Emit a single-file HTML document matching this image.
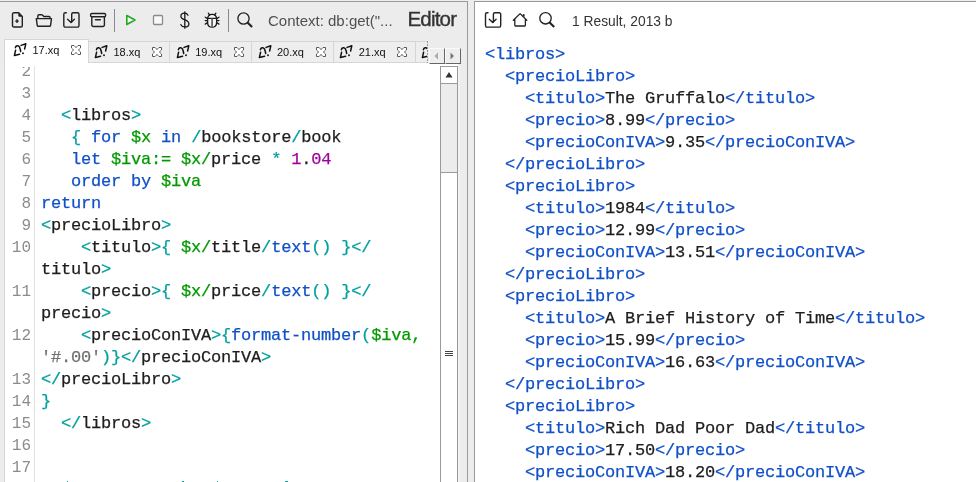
<!DOCTYPE html>
<html><head><meta charset="utf-8"><style>
*{margin:0;padding:0;box-sizing:content-box}
html,body{width:976px;height:482px;overflow:hidden;background:#ececec}
body{position:relative;font-family:"Liberation Sans",sans-serif}
.abs{position:absolute}
.r{position:absolute;left:0;white-space:pre;font-family:"Liberation Mono",monospace;font-size:17px;letter-spacing:-0.2px;line-height:22px;height:22px;color:#1e1e1e;-webkit-text-stroke:0.25px currentColor}
.n{position:absolute;right:1px;white-space:pre;font-family:"Liberation Mono",monospace;font-size:16px;letter-spacing:0px;line-height:22px;color:#8c8c8c}
.tab{position:absolute;overflow:hidden;box-sizing:content-box}
.tl{position:absolute;font-size:11px;line-height:14px;color:#111;white-space:pre}
</style></head><body>
<div id="w" style="position:absolute;left:0;top:0;width:976px;height:482px;background:#ececec;filter:blur(0);overflow:hidden">
<div class="abs" style="left:0;top:0;width:976px;height:1px;background:#eeeeee"></div>
<div class="abs" style="left:0;top:1px;width:467px;height:1px;background:#9a9a9a"></div>
<div class="abs" style="left:475px;top:1px;width:501px;height:1px;background:#9a9a9a"></div>
<div class="abs" style="left:467px;top:1px;width:1px;height:481px;background:#9a9a9a"></div>
<div class="abs" style="left:474px;top:1px;width:1px;height:481px;background:#9a9a9a"></div>
<div class="abs" style="left:475px;top:2px;width:501px;height:480px;background:#fff"></div>

<!-- left toolbar -->
<svg class="abs" style="left:0;top:0" width="467" height="38" viewBox="0 0 467 38">
 <g stroke="#222" stroke-width="1.4" fill="none" stroke-linecap="round" stroke-linejoin="round">
  <path d="M13.8 12.8 h4.9 l3.6 3.6 v9.3 a1.3 1.3 0 0 1 -1.3 1.3 h-7.2 a1.3 1.3 0 0 1 -1.3 -1.3 v-11.6 a1.3 1.3 0 0 1 1.3 -1.3z"/>
  <path d="M17 19.8 v2.6 M15.7 21.1 h2.6"/>
 </g>
 <path d="M18.3 12.8 L22.3 16.8 H19.5 a1.2 1.2 0 0 1 -1.2 -1.2z" fill="#222"/>
 <g stroke="#222" stroke-width="1.4" fill="none" stroke-linecap="round" stroke-linejoin="round">
  <path d="M37.8 18 V16 a1.3 1.3 0 0 1 1.3 -1.3 h2.4 a1.3 1.3 0 0 1 0.9 .4 l1.4 1.4 h5 a1.3 1.3 0 0 1 1.3 1.3 v0.4"/>
  <path d="M36.3 18.6 h15.2 l-0.9 6.5 a1.3 1.3 0 0 1 -1.3 1.2 h-10.8 a1.3 1.3 0 0 1 -1.3 -1.2z"/>
  <path d="M66.3 12.8 h-1 a1.5 1.5 0 0 0 -1.5 1.5 v11.3 a1.5 1.5 0 0 0 1.5 1.5 h12.2 a1.5 1.5 0 0 0 1.5 -1.5 v-11.3 a1.5 1.5 0 0 0 -1.5 -1.5 h-4.3 a1.5 1.5 0 0 0 -1.5 1.5 v7.8"/>
  <path d="M67.6 19.2 l3.4 3.2 l3.4 -3.2"/>
  <path d="M90.6 14.8 a1.3 1.3 0 0 1 1.3 -1.3 h12.4 a1.3 1.3 0 0 1 1.3 1.3 v0.6 a1.3 1.3 0 0 1 -1.3 1.3 h-12.4 a1.3 1.3 0 0 1 -1.3 -1.3z"/>
  <path d="M91.8 16.7 v8.2 a1.6 1.6 0 0 0 1.6 1.6 h9.4 a1.6 1.6 0 0 0 1.6 -1.6 v-8.2"/>
  <path d="M95.5 19.7 h4.8"/>
 </g>
 <rect x="114" y="9" width="1" height="23" fill="#8a8a8a"/>
 <path d="M126.8 15.5 L135 20 L126.8 24.5 Z" stroke="#22aa22" stroke-width="1.6" fill="#f6f6f6" stroke-linejoin="round"/>
 <rect x="153.5" y="15.5" width="9" height="9" rx="1" stroke="#8a8a8a" stroke-width="1.3" fill="#f8f8f8"/>
 <g stroke="#1a1a1a" stroke-width="1.3" fill="none" stroke-linecap="round">
  <path d="M188 15.2 C187.2 13.7 186 13.2 184.6 13.2 C182.3 13.2 180.9 14.5 180.9 16.3 C180.9 18.4 182.9 19.2 185 19.9 C187.4 20.7 188.9 21.7 188.9 23.9 C188.9 25.9 187.1 26.9 184.9 26.9 C182.9 26.9 181.6 26.1 180.9 24.7"/>
  <path d="M184.8 11.8 V28.2"/>
 </g>
 <g stroke="#1a1a1a" stroke-width="1.3" fill="none" stroke-linecap="round" stroke-linejoin="round">
  <path d="M207.6 19.2 C207.6 15.7 209.6 14.3 212.1 14.3 C214.6 14.3 216.6 15.7 216.6 19.2 V22.4 C216.6 25.5 214.6 27.2 212.1 27.2 C209.6 27.2 207.6 25.5 207.6 22.4 Z" fill="#f6f6f6"/>
  <path d="M207.4 18.4 H216.8"/>
  <path d="M208.3 13.2 L209.6 15 M215.9 13.2 L214.6 15"/>
  <path d="M205.2 17.2 L207.6 18.6 M205.2 20.6 H207.6 M205.2 24.1 L207.6 22.6 M219 17.2 L216.6 18.6 M219 20.6 H216.6 M219 24.1 L216.6 22.6"/>
 </g>
 <path d="M212.1 18.6 V26.8" stroke="#666" stroke-width="1.8"/>
 <rect x="228" y="9" width="1" height="23" fill="#8a8a8a"/>
 <g stroke="#222" stroke-width="1.4" fill="none" stroke-linecap="round" stroke-linejoin="round">
  <circle cx="243.5" cy="18.5" r="5.6" stroke-width="1.35"/>
  <path d="M247.5 22.5 l4.6 4.6" stroke-width="2.1" stroke-linecap="butt"/>
 </g>
</svg>
<div class="abs" style="left:268px;top:12px;font-size:15px;line-height:18px;color:#505050;white-space:pre">Context: db:get(&quot;...</div>
<div class="abs" style="left:407.5px;top:7px;font-size:20.5px;letter-spacing:-0.8px;line-height:24px;color:#333;white-space:pre;-webkit-text-stroke:0.35px #333">Editor</div>

<!-- tabs -->
<div class="abs" style="left:4px;top:39px;width:83px;height:25px;background:#fff;border:1px solid #d6d6d6;border-bottom:none"></div><svg class="abs" style="left:12px;top:42px" width="16" height="16" viewBox="0 0 16 16"><path d="M3.4 5.7 C3.8 3.6 6.3 3 7.4 4.9 C8.1 6.3 8.4 7.8 8.7 9.5 M3.6 8.2 L2.4 13.6 L7.6 12.3 M9.1 3.4 L13.8 1.8 L12.6 7" stroke="#111" stroke-width="1.5" fill="none" stroke-linecap="round" stroke-linejoin="round"/><circle cx="11" cy="11.3" r="0.95" fill="#111"/></svg><div class="tl" style="left:32.5px;top:43px">17.xq</div><svg class="abs" style="left:71px;top:45px" width="11" height="11" viewBox="0 0 11 11"><path d="M0.5 0.5 H3 C3.8 1.3 4.2 2.3 5 2.3 C5.8 2.3 6.2 1.3 7 0.5 H9.5 V3 C8.7 3.8 7.7 4.2 7.7 5 C7.7 5.8 8.7 6.2 9.5 7 V9.5 H7 C6.2 8.7 5.8 7.7 5 7.7 C4.2 7.7 3.8 8.7 3 9.5 H0.5 V7 C1.3 6.2 2.3 5.8 2.3 5 C2.3 4.2 1.3 3.8 0.5 3 Z" stroke="#5a5a5a" stroke-width="1" fill="#fff" stroke-linejoin="miter"/></svg><div class="abs" style="left:89px;top:41px;width:80px;height:20px;background:#eeeeee;border-top:1px solid #d6d6d6;border-bottom:1px solid #d6d6d6"></div><div class="abs" style="left:169px;top:41px;width:1px;height:22px;background:#d6d6d6"></div><svg class="abs" style="left:93px;top:44px" width="16" height="16" viewBox="0 0 16 16"><path d="M3.4 5.7 C3.8 3.6 6.3 3 7.4 4.9 C8.1 6.3 8.4 7.8 8.7 9.5 M3.6 8.2 L2.4 13.6 L7.6 12.3 M9.1 3.4 L13.8 1.8 L12.6 7" stroke="#111" stroke-width="1.5" fill="none" stroke-linecap="round" stroke-linejoin="round"/><circle cx="11" cy="11.3" r="0.95" fill="#111"/></svg><div class="tl" style="left:113.5px;top:45px">18.xq</div><svg class="abs" style="left:152px;top:47px" width="11" height="11" viewBox="0 0 11 11"><path d="M0.5 0.5 H3 C3.8 1.3 4.2 2.3 5 2.3 C5.8 2.3 6.2 1.3 7 0.5 H9.5 V3 C8.7 3.8 7.7 4.2 7.7 5 C7.7 5.8 8.7 6.2 9.5 7 V9.5 H7 C6.2 8.7 5.8 7.7 5 7.7 C4.2 7.7 3.8 8.7 3 9.5 H0.5 V7 C1.3 6.2 2.3 5.8 2.3 5 C2.3 4.2 1.3 3.8 0.5 3 Z" stroke="#5a5a5a" stroke-width="1" fill="#fff" stroke-linejoin="miter"/></svg><div class="abs" style="left:170px;top:41px;width:81px;height:20px;background:#eeeeee;border-top:1px solid #d6d6d6;border-bottom:1px solid #d6d6d6"></div><div class="abs" style="left:251px;top:41px;width:1px;height:22px;background:#d6d6d6"></div><svg class="abs" style="left:174.75px;top:44px" width="16" height="16" viewBox="0 0 16 16"><path d="M3.4 5.7 C3.8 3.6 6.3 3 7.4 4.9 C8.1 6.3 8.4 7.8 8.7 9.5 M3.6 8.2 L2.4 13.6 L7.6 12.3 M9.1 3.4 L13.8 1.8 L12.6 7" stroke="#111" stroke-width="1.5" fill="none" stroke-linecap="round" stroke-linejoin="round"/><circle cx="11" cy="11.3" r="0.95" fill="#111"/></svg><div class="tl" style="left:195.25px;top:45px">19.xq</div><svg class="abs" style="left:233.75px;top:47px" width="11" height="11" viewBox="0 0 11 11"><path d="M0.5 0.5 H3 C3.8 1.3 4.2 2.3 5 2.3 C5.8 2.3 6.2 1.3 7 0.5 H9.5 V3 C8.7 3.8 7.7 4.2 7.7 5 C7.7 5.8 8.7 6.2 9.5 7 V9.5 H7 C6.2 8.7 5.8 7.7 5 7.7 C4.2 7.7 3.8 8.7 3 9.5 H0.5 V7 C1.3 6.2 2.3 5.8 2.3 5 C2.3 4.2 1.3 3.8 0.5 3 Z" stroke="#5a5a5a" stroke-width="1" fill="#fff" stroke-linejoin="miter"/></svg><div class="abs" style="left:252px;top:41px;width:81px;height:20px;background:#eeeeee;border-top:1px solid #d6d6d6;border-bottom:1px solid #d6d6d6"></div><div class="abs" style="left:333px;top:41px;width:1px;height:22px;background:#d6d6d6"></div><svg class="abs" style="left:256.5px;top:44px" width="16" height="16" viewBox="0 0 16 16"><path d="M3.4 5.7 C3.8 3.6 6.3 3 7.4 4.9 C8.1 6.3 8.4 7.8 8.7 9.5 M3.6 8.2 L2.4 13.6 L7.6 12.3 M9.1 3.4 L13.8 1.8 L12.6 7" stroke="#111" stroke-width="1.5" fill="none" stroke-linecap="round" stroke-linejoin="round"/><circle cx="11" cy="11.3" r="0.95" fill="#111"/></svg><div class="tl" style="left:277.0px;top:45px">20.xq</div><svg class="abs" style="left:315.5px;top:47px" width="11" height="11" viewBox="0 0 11 11"><path d="M0.5 0.5 H3 C3.8 1.3 4.2 2.3 5 2.3 C5.8 2.3 6.2 1.3 7 0.5 H9.5 V3 C8.7 3.8 7.7 4.2 7.7 5 C7.7 5.8 8.7 6.2 9.5 7 V9.5 H7 C6.2 8.7 5.8 7.7 5 7.7 C4.2 7.7 3.8 8.7 3 9.5 H0.5 V7 C1.3 6.2 2.3 5.8 2.3 5 C2.3 4.2 1.3 3.8 0.5 3 Z" stroke="#5a5a5a" stroke-width="1" fill="#fff" stroke-linejoin="miter"/></svg><div class="abs" style="left:334px;top:41px;width:81px;height:20px;background:#eeeeee;border-top:1px solid #d6d6d6;border-bottom:1px solid #d6d6d6"></div><div class="abs" style="left:415px;top:41px;width:1px;height:22px;background:#d6d6d6"></div><svg class="abs" style="left:338.25px;top:44px" width="16" height="16" viewBox="0 0 16 16"><path d="M3.4 5.7 C3.8 3.6 6.3 3 7.4 4.9 C8.1 6.3 8.4 7.8 8.7 9.5 M3.6 8.2 L2.4 13.6 L7.6 12.3 M9.1 3.4 L13.8 1.8 L12.6 7" stroke="#111" stroke-width="1.5" fill="none" stroke-linecap="round" stroke-linejoin="round"/><circle cx="11" cy="11.3" r="0.95" fill="#111"/></svg><div class="tl" style="left:358.75px;top:45px">21.xq</div><svg class="abs" style="left:397.25px;top:47px" width="11" height="11" viewBox="0 0 11 11"><path d="M0.5 0.5 H3 C3.8 1.3 4.2 2.3 5 2.3 C5.8 2.3 6.2 1.3 7 0.5 H9.5 V3 C8.7 3.8 7.7 4.2 7.7 5 C7.7 5.8 8.7 6.2 9.5 7 V9.5 H7 C6.2 8.7 5.8 7.7 5 7.7 C4.2 7.7 3.8 8.7 3 9.5 H0.5 V7 C1.3 6.2 2.3 5.8 2.3 5 C2.3 4.2 1.3 3.8 0.5 3 Z" stroke="#5a5a5a" stroke-width="1" fill="#fff" stroke-linejoin="miter"/></svg><div class="abs" style="left:416px;top:41px;width:12px;height:22px;overflow:hidden"><div class="abs" style="left:0;top:0;width:12px;height:20px;background:#eeeeee;border-top:1px solid #d6d6d6;border-bottom:1px solid #d6d6d6"></div><svg class="abs" style="left:4px;top:3px" width="16" height="16" viewBox="0 0 16 16"><path d="M3.4 5.7 C3.8 3.6 6.3 3 7.4 4.9 C8.1 6.3 8.4 7.8 8.7 9.5 M3.6 8.2 L2.4 13.6 L7.6 12.3 M9.1 3.4 L13.8 1.8 L12.6 7" stroke="#111" stroke-width="1.5" fill="none" stroke-linecap="round" stroke-linejoin="round"/><circle cx="11" cy="11.3" r="0.95" fill="#111"/></svg></div><div class="abs" style="left:427px;top:41px;width:1px;height:22px;background:repeating-linear-gradient(#999 0 2px,#eee 2px 3px)"></div>
<!-- editor -->
<div class="abs" style="left:4px;top:63px;width:1px;height:419px;background:#d8d8d8"></div>
<div class="abs" style="left:5px;top:63px;width:453px;height:419px;background:#fff"></div>
<div class="abs" style="left:34px;top:66px;width:1px;height:416px;background:#e2e2e2"></div>
<div class="abs" style="left:5px;top:67px;width:28px;height:415px;overflow:hidden"><div style="position:absolute;left:0;top:-67px;width:27px;height:600px"><div class="n" style="top:61px">2</div><div class="n" style="top:83px">3</div><div class="n" style="top:105px">4</div><div class="n" style="top:127px">5</div><div class="n" style="top:149px">6</div><div class="n" style="top:171px">7</div><div class="n" style="top:193px">8</div><div class="n" style="top:215px">9</div><div class="n" style="top:237px">10</div><div class="n" style="top:259px"></div><div class="n" style="top:281px">11</div><div class="n" style="top:303px"></div><div class="n" style="top:325px">12</div><div class="n" style="top:347px"></div><div class="n" style="top:369px">13</div><div class="n" style="top:391px">14</div><div class="n" style="top:413px">15</div><div class="n" style="top:435px">16</div><div class="n" style="top:457px">17</div><div class="n" style="top:479px">18</div></div></div>
<div class="abs" style="left:41px;top:66px;width:399px;height:416px;overflow:hidden"><div style="position:absolute;left:0;top:-66px;width:600px;height:600px"><div class="r" style="top:61px"></div><div class="r" style="top:83px"></div><div class="r" style="top:105px">&nbsp;&nbsp;<span style="color:#00a0a0">&lt;</span><span style="color:#1e1e1e">libros</span><span style="color:#00a0a0">&gt;</span></div><div class="r" style="top:127px">&nbsp;&nbsp;&nbsp;<span style="color:#00a0a0">{</span>&nbsp;<span style="color:#1050c8">for</span>&nbsp;<span style="color:#009a00">$x</span>&nbsp;<span style="color:#1050c8">in</span>&nbsp;<span style="color:#00a0a0">/</span><span style="color:#1e1e1e">bookstore</span><span style="color:#00a0a0">/</span><span style="color:#1e1e1e">book</span></div><div class="r" style="top:149px">&nbsp;&nbsp;&nbsp;<span style="color:#1050c8">let</span>&nbsp;<span style="color:#009a00">$iva:=</span>&nbsp;<span style="color:#009a00">$x/</span><span style="color:#1e1e1e">price</span>&nbsp;<span style="color:#00a0a0">*</span>&nbsp;<span style="color:#a000a0">1</span><span style="color:#1e1e1e">.</span><span style="color:#a000a0">04</span></div><div class="r" style="top:171px">&nbsp;&nbsp;&nbsp;<span style="color:#1050c8">order</span>&nbsp;<span style="color:#1050c8">by</span>&nbsp;<span style="color:#009a00">$iva</span></div><div class="r" style="top:193px"><span style="color:#1050c8">return</span></div><div class="r" style="top:215px"><span style="color:#00a0a0">&lt;</span><span style="color:#1e1e1e">precioLibro</span><span style="color:#00a0a0">&gt;</span></div><div class="r" style="top:237px">&nbsp;&nbsp;&nbsp;&nbsp;<span style="color:#00a0a0">&lt;</span><span style="color:#1e1e1e">titulo</span><span style="color:#00a0a0">&gt;{</span>&nbsp;<span style="color:#009a00">$x/</span><span style="color:#1e1e1e">title</span><span style="color:#00a0a0">/</span><span style="color:#1050c8">text</span><span style="color:#00a0a0">()</span>&nbsp;<span style="color:#00a0a0">}&lt;/</span></div><div class="r" style="top:259px"><span style="color:#1e1e1e">titulo</span><span style="color:#00a0a0">&gt;</span></div><div class="r" style="top:281px">&nbsp;&nbsp;&nbsp;&nbsp;<span style="color:#00a0a0">&lt;</span><span style="color:#1e1e1e">precio</span><span style="color:#00a0a0">&gt;{</span>&nbsp;<span style="color:#009a00">$x/</span><span style="color:#1e1e1e">price</span><span style="color:#00a0a0">/</span><span style="color:#1050c8">text</span><span style="color:#00a0a0">()</span>&nbsp;<span style="color:#00a0a0">}&lt;/</span></div><div class="r" style="top:303px"><span style="color:#1e1e1e">precio</span><span style="color:#00a0a0">&gt;</span></div><div class="r" style="top:325px">&nbsp;&nbsp;&nbsp;&nbsp;<span style="color:#00a0a0">&lt;</span><span style="color:#1e1e1e">precioConIVA</span><span style="color:#00a0a0">&gt;{</span><span style="color:#1050c8">format-number</span><span style="color:#00a0a0">(</span><span style="color:#009a00">$iva,</span></div><div class="r" style="top:347px"><span style="color:#707070">&#x27;#.00&#x27;</span><span style="color:#00a0a0">)}&lt;/</span><span style="color:#1e1e1e">precioConIVA</span><span style="color:#00a0a0">&gt;</span></div><div class="r" style="top:369px"><span style="color:#00a0a0">&lt;/</span><span style="color:#1e1e1e">precioLibro</span><span style="color:#00a0a0">&gt;</span></div><div class="r" style="top:391px"><span style="color:#00a0a0">}</span></div><div class="r" style="top:413px">&nbsp;&nbsp;<span style="color:#00a0a0">&lt;/</span><span style="color:#1e1e1e">libros</span><span style="color:#00a0a0">&gt;</span></div><div class="r" style="top:435px"></div><div class="r" style="top:457px"></div></div></div>
<div class="abs" style="left:429px;top:48px;box-sizing:border-box;width:16px;height:16px;background:#eeeeee;border-right:1px solid #666;border-bottom:1px solid #666;border-top:1px solid #fafafa;border-left:1px solid #fafafa"></div>
<div class="abs" style="left:445px;top:48px;box-sizing:border-box;width:16px;height:16px;background:#eeeeee;border-right:1px solid #666;border-bottom:1px solid #666;border-top:1px solid #fafafa;border-left:1px solid #fafafa"></div>
<svg class="abs" style="left:429px;top:48px" width="32" height="16"><path d="M5.5 8 L9 4.5 V11.5Z" fill="#aaa"/><path d="M21.5 4.5 L25 8 L21.5 11.5Z" fill="#777"/></svg>
<div class="abs" style="left:67px;top:481px;width:1px;height:1px;background:#00a0a0"></div><div class="abs" style="left:182px;top:481px;width:2px;height:1px;background:#00a0a0"></div><div class="abs" style="left:217px;top:481px;width:1px;height:1px;background:#00a0a0"></div><div class="abs" style="left:285px;top:481px;width:3px;height:1px;background:#00a0a0"></div>
<!-- scrollbar -->
<div class="abs" style="left:458px;top:64px;width:9px;height:418px;background:#ececec"></div><div class="abs" style="left:458px;top:66px;width:2px;height:416px;background:#f2f2f2"></div>
<div class="abs" style="left:440px;top:66px;width:16px;height:420px;border:1px solid #9a9a9a;background:#fff"></div>
<div class="abs" style="left:441px;top:83px;width:16px;height:88px;background:#ececec;border-top:1px solid #9a9a9a;border-bottom:1px solid #9a9a9a"></div>
<svg class="abs" style="left:440px;top:66px" width="18" height="18"><path d="M9 6 L12.5 11.5 H5.5Z" fill="#333"/></svg>
<div class="abs" style="left:445px;top:351px;width:8px;height:1px;background:#444;box-shadow:0 2px 0 #444,0 4px 0 #444"></div>

<!-- right toolbar -->
<svg class="abs" style="left:475px;top:0" width="200" height="38">
 <g stroke="#222" stroke-width="1.4" fill="none" stroke-linecap="round" stroke-linejoin="round">
  <path d="M13 12.8 h-1 a1.5 1.5 0 0 0 -1.5 1.5 v11.3 a1.5 1.5 0 0 0 1.5 1.5 h12.2 a1.5 1.5 0 0 0 1.5 -1.5 v-11.3 a1.5 1.5 0 0 0 -1.5 -1.5 h-4.3 a1.5 1.5 0 0 0 -1.5 1.5 v7.8"/>
  <path d="M14.3 19.2 l3.4 3.2 l3.4 -3.2"/>
  <path d="M38.3 20.3 L45.1 13.6 L51.8 20.3 M39.8 19 V25.3 a0.7 0.7 0 0 0 .7 .7 h9.2 a.7 .7 0 0 0 .7 -.7 V19" stroke-width="1.3"/>
  <path d="M48.7 16.6 V14.2" stroke-width="1.8" stroke-linecap="butt"/>
  <circle cx="70.5" cy="18.3" r="5.7" stroke-width="1.35"/>
  <path d="M74.6 22.4 l4.6 4.6" stroke-width="2.1" stroke-linecap="butt"/>
 </g>
</svg>
<div class="abs" style="left:572px;top:13px;font-size:13.8px;line-height:18px;color:#333;white-space:pre">1 Result, 2013 b</div>
<div class="abs" style="left:485px;top:40px;width:491px;height:442px;overflow:hidden"><div style="position:absolute;left:0;top:-40px;width:600px;height:600px"><div class="r" style="top:44px"><span style="color:#1050c8">&lt;libros&gt;</span></div><div class="r" style="top:66px">&nbsp;&nbsp;<span style="color:#1050c8">&lt;precioLibro&gt;</span></div><div class="r" style="top:88px">&nbsp;&nbsp;&nbsp;&nbsp;<span style="color:#1050c8">&lt;titulo&gt;</span><span style="color:#1e1e1e">The&nbsp;Gruffalo</span><span style="color:#1050c8">&lt;/titulo&gt;</span></div><div class="r" style="top:110px">&nbsp;&nbsp;&nbsp;&nbsp;<span style="color:#1050c8">&lt;precio&gt;</span><span style="color:#1e1e1e">8.99</span><span style="color:#1050c8">&lt;/precio&gt;</span></div><div class="r" style="top:132px">&nbsp;&nbsp;&nbsp;&nbsp;<span style="color:#1050c8">&lt;precioConIVA&gt;</span><span style="color:#1e1e1e">9.35</span><span style="color:#1050c8">&lt;/precioConIVA&gt;</span></div><div class="r" style="top:154px">&nbsp;&nbsp;<span style="color:#1050c8">&lt;/precioLibro&gt;</span></div><div class="r" style="top:176px">&nbsp;&nbsp;<span style="color:#1050c8">&lt;precioLibro&gt;</span></div><div class="r" style="top:198px">&nbsp;&nbsp;&nbsp;&nbsp;<span style="color:#1050c8">&lt;titulo&gt;</span><span style="color:#1e1e1e">1984</span><span style="color:#1050c8">&lt;/titulo&gt;</span></div><div class="r" style="top:220px">&nbsp;&nbsp;&nbsp;&nbsp;<span style="color:#1050c8">&lt;precio&gt;</span><span style="color:#1e1e1e">12.99</span><span style="color:#1050c8">&lt;/precio&gt;</span></div><div class="r" style="top:242px">&nbsp;&nbsp;&nbsp;&nbsp;<span style="color:#1050c8">&lt;precioConIVA&gt;</span><span style="color:#1e1e1e">13.51</span><span style="color:#1050c8">&lt;/precioConIVA&gt;</span></div><div class="r" style="top:264px">&nbsp;&nbsp;<span style="color:#1050c8">&lt;/precioLibro&gt;</span></div><div class="r" style="top:286px">&nbsp;&nbsp;<span style="color:#1050c8">&lt;precioLibro&gt;</span></div><div class="r" style="top:308px">&nbsp;&nbsp;&nbsp;&nbsp;<span style="color:#1050c8">&lt;titulo&gt;</span><span style="color:#1e1e1e">A&nbsp;Brief&nbsp;History&nbsp;of&nbsp;Time</span><span style="color:#1050c8">&lt;/titulo&gt;</span></div><div class="r" style="top:330px">&nbsp;&nbsp;&nbsp;&nbsp;<span style="color:#1050c8">&lt;precio&gt;</span><span style="color:#1e1e1e">15.99</span><span style="color:#1050c8">&lt;/precio&gt;</span></div><div class="r" style="top:352px">&nbsp;&nbsp;&nbsp;&nbsp;<span style="color:#1050c8">&lt;precioConIVA&gt;</span><span style="color:#1e1e1e">16.63</span><span style="color:#1050c8">&lt;/precioConIVA&gt;</span></div><div class="r" style="top:374px">&nbsp;&nbsp;<span style="color:#1050c8">&lt;/precioLibro&gt;</span></div><div class="r" style="top:396px">&nbsp;&nbsp;<span style="color:#1050c8">&lt;precioLibro&gt;</span></div><div class="r" style="top:418px">&nbsp;&nbsp;&nbsp;&nbsp;<span style="color:#1050c8">&lt;titulo&gt;</span><span style="color:#1e1e1e">Rich&nbsp;Dad&nbsp;Poor&nbsp;Dad</span><span style="color:#1050c8">&lt;/titulo&gt;</span></div><div class="r" style="top:440px">&nbsp;&nbsp;&nbsp;&nbsp;<span style="color:#1050c8">&lt;precio&gt;</span><span style="color:#1e1e1e">17.50</span><span style="color:#1050c8">&lt;/precio&gt;</span></div><div class="r" style="top:462px">&nbsp;&nbsp;&nbsp;&nbsp;<span style="color:#1050c8">&lt;precioConIVA&gt;</span><span style="color:#1e1e1e">18.20</span><span style="color:#1050c8">&lt;/precioConIVA&gt;</span></div><div class="r" style="top:484px">&nbsp;&nbsp;<span style="color:#1050c8">&lt;/precioLibro&gt;</span></div></div></div>
</div></body></html>
